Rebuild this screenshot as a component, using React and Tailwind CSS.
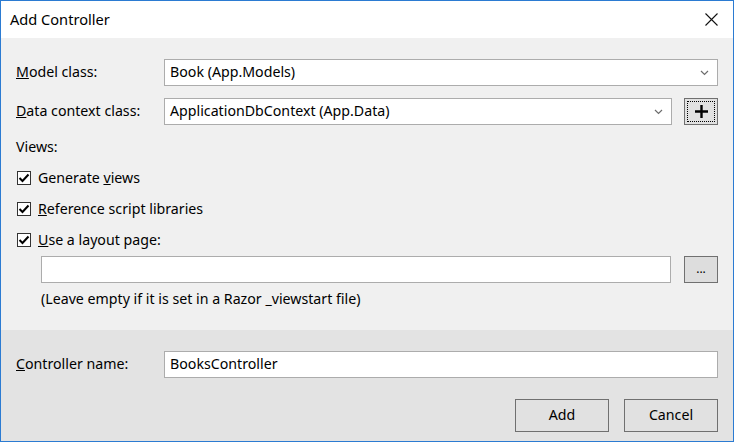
import React from "react";

function Chevron() {
  return (
    <svg width="9" height="6" viewBox="0 0 9 6" className="shrink-0">
      <path d="M1 1 L4.5 4.5 L8 1" fill="none" stroke="#6d6d6d" strokeWidth="1.2" />
    </svg>
  );
}

function Checkbox({ children }) {
  return (
    <div className="flex items-center h-[16px]">
      <div className="w-[14px] h-[14px] border border-[#333333] bg-white flex items-center justify-center ml-[1px]">
        <svg width="12" height="12" viewBox="0 0 12 12">
          <path d="M1.5 6 L4.5 9 L10.5 2.5" fill="none" stroke="#000" strokeWidth="2" />
        </svg>
      </div>
      <span className="ml-[7px]">{children}</span>
    </div>
  );
}

function Select({ value, className }) {
  return (
    <div className={`h-[27px] bg-white border border-[#acacac] flex items-center justify-between pl-[5px] pr-[8px] ${className}`}>
      <span>{value}</span>
      <Chevron />
    </div>
  );
}

export default function App() {
  return (
    <div
      className="w-[734px] h-[442px] border border-[#2b7bd2] flex flex-col text-[14.2px] text-black leading-none"
      style={{ fontFamily: '"Noto Sans", "Open Sans", sans-serif' }}
    >
      {/* title bar */}
      <div className="h-[37px] bg-white flex items-center justify-between pl-[9px] pr-[15px] shrink-0">
        <span className="text-[14.6px]">Add Controller</span>
        <svg width="13" height="13" viewBox="0 0 13 13">
          <path d="M0.5 0.5 L12.5 12.5 M12.5 0.5 L0.5 12.5" stroke="#111" strokeWidth="1.1" />
        </svg>
      </div>

      {/* main body */}
      <div className="bg-[#f0f0f0] flex-1 pl-[15px] pr-[15px] pt-[21px]">
        <div className="flex items-center">
          <span className="w-[148px]"><u>M</u>odel class:</span>
          <Select value="Book (App.Models)" className="w-[554px]" />
        </div>
        <div className="flex items-center mt-[12px]">
          <span className="w-[148px]"><u>D</u>ata context class:</span>
          <Select value="ApplicationDbContext (App.Data)" className="w-[508px]" />
          <div className="ml-[12px] w-[34px] h-[27px] border border-[#707070] bg-[#e1e1e1] p-[2px]">
            <div className="w-full h-full border border-dotted border-black flex items-center justify-center">
              <svg width="13" height="13" viewBox="0 0 13 13">
                <path d="M6.5 0 V13 M0 6.5 H13" stroke="#000" strokeWidth="2.4" />
              </svg>
            </div>
          </div>
        </div>
        <div className="mt-[15px]">Views:</div>
        <div className="mt-[16px] flex flex-col gap-[15px]">
          <Checkbox>Generate <u>v</u>iews</Checkbox>
          <Checkbox><u>R</u>eference script libraries</Checkbox>
          <Checkbox><u>U</u>se a layout page:</Checkbox>
        </div>
        <div className="flex items-center mt-[8px] ml-[25px]">
          <div className="w-[631px] h-[27px] bg-white border border-[#acacac]" />
          <div className="ml-[13px] w-[34px] h-[27px] border border-[#707070] bg-[#dddddd] flex items-end justify-center pb-[7px]">
            <span className="text-[12px] leading-none">...</span>
          </div>
        </div>
        <div className="mt-[9px] ml-[25px]">(Leave empty if it is set in a Razor _viewstart file)</div>
      </div>

      {/* bottom section */}
      <div className="bg-[#e3e3e3] h-[111px] shrink-0 pl-[15px] pr-[15px] pt-[21px]">
        <div className="flex items-center">
          <span className="w-[148px]"><u>C</u>ontroller name:</span>
          <div className="w-[554px] h-[27px] bg-white border border-[#acacac] flex items-center pl-[5px]">
            BooksController
          </div>
        </div>
        <div className="flex justify-end gap-[15px] mt-[21px]">
          <div className="w-[94px] h-[33px] border border-[#707070] bg-[#e1e1e1] flex items-center justify-center">Add</div>
          <div className="w-[94px] h-[33px] border border-[#707070] bg-[#e1e1e1] flex items-center justify-center">Cancel</div>
        </div>
      </div>
    </div>
  );
}
